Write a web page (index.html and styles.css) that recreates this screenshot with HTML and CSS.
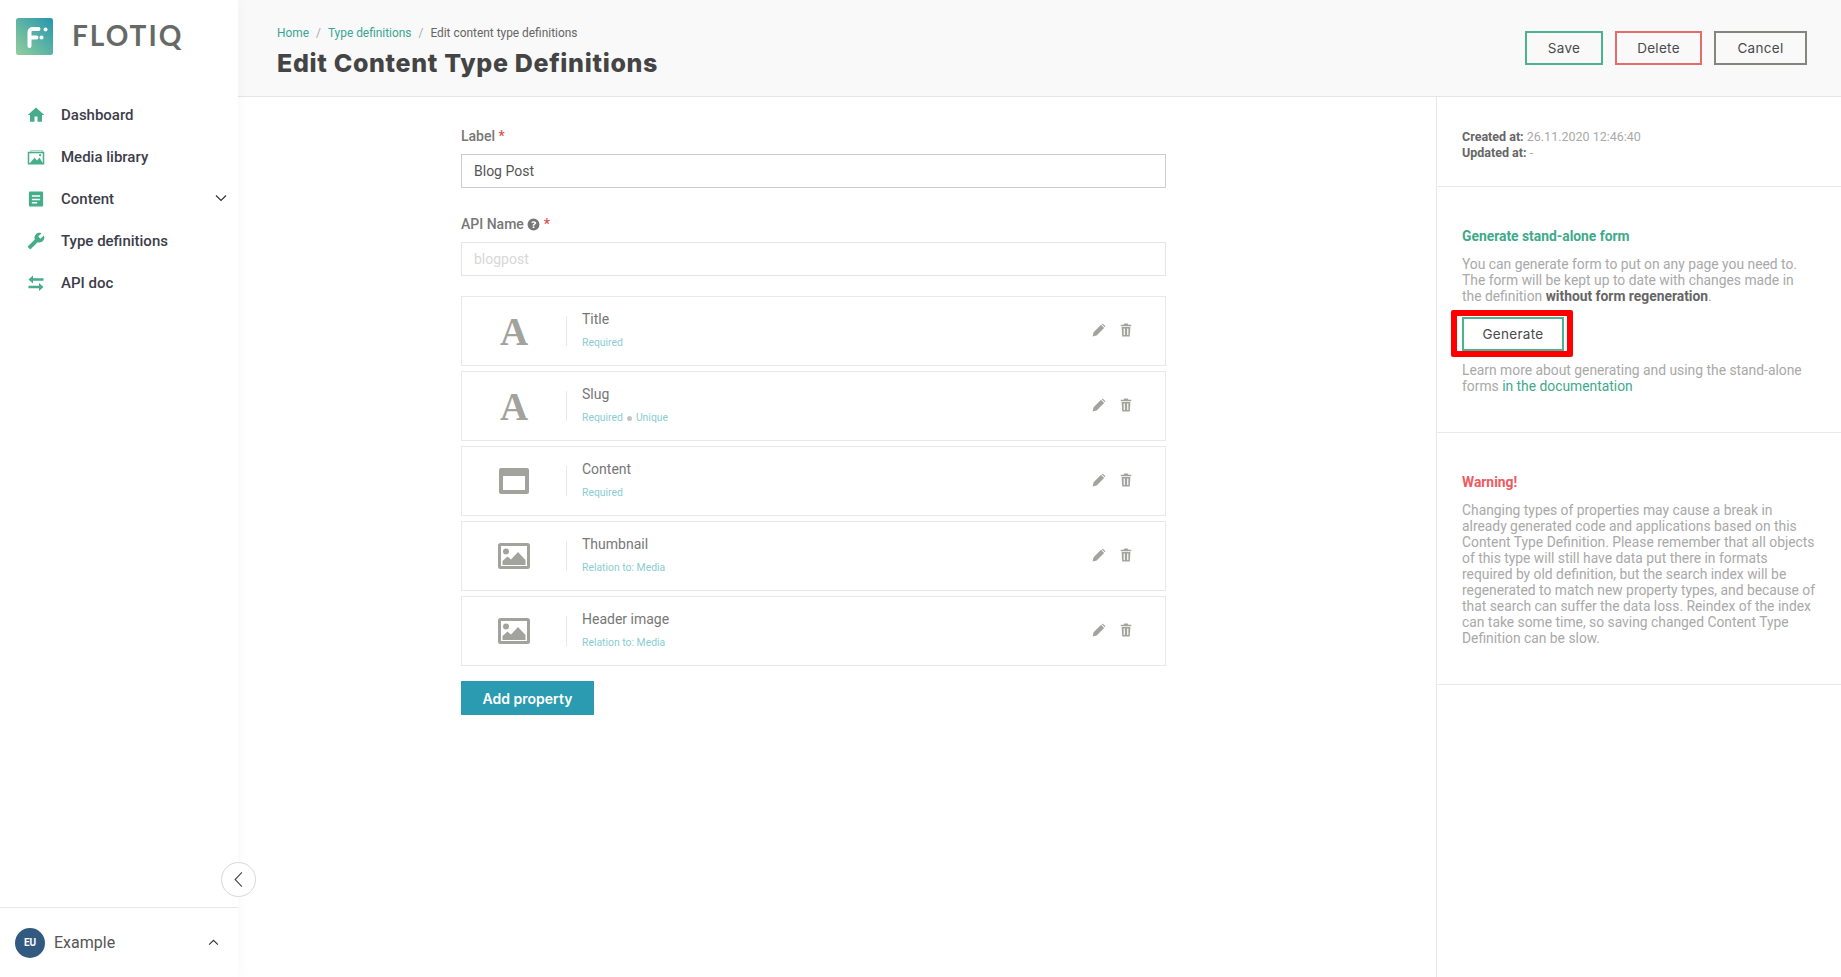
FILE: index.html
```html
<!DOCTYPE html>
<html lang="en">
<head>
  <meta charset="UTF-8">
  <meta name="viewport" content="width=device-width, initial-scale=1.0">
  <title>Flotiq - Edit Content Type Definitions</title>
  <link rel="stylesheet" href="styles.css">
</head>
<body>
  <!-- Sidebar -->
  <aside class="sidebar">
    <div class="brand">
      <svg class="brand-mark" viewBox="0 0 37 37">
        <defs>
          <linearGradient id="brandGrad" x1="1" y1="0" x2="0" y2="1">
            <stop offset="0" stop-color="#2596ad"/>
            <stop offset="1" stop-color="#92cf9d"/>
          </linearGradient>
        </defs>
        <rect width="37" height="37" rx="2.5" fill="url(#brandGrad)"/>
        <path d="M13.5 28V14a3 3 0 0 1 3-3h6M13.5 19.5h7" fill="none" stroke="#fff" stroke-width="4" stroke-linecap="round"/>
        <circle cx="29.5" cy="11.5" r="2" fill="#fff"/>
        <circle cx="25.5" cy="19.5" r="2" fill="#fff"/>
      </svg>
      <span class="brand-name">FLOTIQ</span>
    </div>
    <nav class="nav">
      <a class="nav-item">
        <svg class="nav-icon" viewBox="0 0 24 24"><path d="M10 21v-7h4v7h6v-9h3L12 2 1 12h3v9z"/></svg>
        Dashboard
      </a>
      <a class="nav-item">
        <svg class="nav-icon" viewBox="0 0 24 24">
          <path d="M5 7V3.500h15.500V6" fill="none" stroke="#a9d9c4" stroke-width="1.500"/>
          <path d="M2 6h20v15H2z" fill="none" stroke="#45ad8a" stroke-width="2"/>
          <path d="M4 20l6-7 3.500 3.500 3-4L21 20z"/>
          <circle cx="17.500" cy="9.500" r="1.500"/>
        </svg>
        Media library
      </a>
      <a class="nav-item">
        <svg class="nav-icon" viewBox="0 0 24 24">
          <path d="M4 2h16a1.500 1.500 0 0 1 1.500 1.500v17A1.500 1.500 0 0 1 20 22H4a1.500 1.500 0 0 1-1.500-1.500v-17A1.500 1.500 0 0 1 4 2zm2.500 5v2h11V7zm0 4.500v2h11v-2zm0 4.500v2h7v-2z" fill-rule="evenodd"/>
        </svg>
        Content
        <svg class="nav-caret" viewBox="0 0 12 8"><path d="M1 1.500l5 5 5-5" fill="none" stroke="#333" stroke-width="1.200"/></svg>
      </a>
      <a class="nav-item">
        <svg class="nav-icon flip" viewBox="0 0 24 24"><path d="M22.700 19l-9.100-9.100c.9-2.300.4-5-1.500-6.900-2-2-5-2.400-7.400-1.300L9 6 6 9 1.600 4.700C.4 7.100.9 10.100 2.900 12.100c1.900 1.900 4.600 2.400 6.900 1.500l9.100 9.100c.4.4 1 .4 1.400 0l2.300-2.300c.5-.4.5-1.100.1-1.400z"/></svg>
        Type definitions
      </a>
      <a class="nav-item">
        <svg class="nav-icon" viewBox="0 0 24 24">
          <path d="M8 3v3.500h14v3.500H8v3.500L2 8.200z" transform="translate(0 -1)"/>
          <path d="M16 11v3.500H2V18h14v3.500l6-5.300z" transform="translate(0 1)"/>
        </svg>
        API doc
      </a>
    </nav>
    <button class="collapse-btn">
      <svg viewBox="0 0 12 20"><path d="M10 1.500L2 10l8 8.500" fill="none" stroke="#444" stroke-width="1.300"/></svg>
    </button>
    <div class="account">
      <span class="avatar">EU</span>
      <span class="account-name">Example</span>
      <svg class="account-caret" viewBox="0 0 12 8"><path d="M1 6.500l5-5 5 5" fill="none" stroke="#333" stroke-width="1.300"/></svg>
    </div>
  </aside>

  <div class="page">
    <!-- Header -->
    <header class="page-header">
      <div class="heading">
        <div class="breadcrumbs">
          <a>Home</a><span class="sep">/</span><a>Type definitions</a><span class="sep">/</span><span>Edit content type definitions</span>
        </div>
        <h1>Edit Content Type Definitions</h1>
      </div>
      <div class="header-actions">
        <button class="btn btn-save">Save</button>
        <button class="btn btn-delete">Delete</button>
        <button class="btn btn-cancel">Cancel</button>
      </div>
    </header>

    <div class="page-body">
      <!-- Form -->
      <main class="form">
        <div class="field-label">Label <span class="req">*</span></div>
        <div class="field">Blog Post</div>

        <div class="field-label second">
          API Name
          <svg class="help" viewBox="0 0 24 24"><path d="M12 1a11 11 0 1 0 0 22 11 11 0 0 0 0-22zm1.700 17.500h-3.400v-3h3.400zm2.700-7.700c-.6.900-1.300 1.300-1.900 1.700-.8.500-1 .8-1 1.500v.3h-3v-.6c0-1.500.8-2.200 1.700-2.800.7-.4 1.200-.8 1.200-1.400 0-.7-.6-1.100-1.400-1.100-.9 0-1.600.4-2.200 1.100L7.900 7.900C9 6.600 10.400 5.800 12.500 5.800c2.500 0 4.600 1.400 4.600 3.500 0 .6-.3 1-.7 1.500z" fill-rule="evenodd"/></svg>
          <span class="req">*</span>
        </div>
        <div class="field disabled">blogpost</div>

        <div class="props">
          <div class="prop">
            <div class="prop-icon"><span class="glyph-a">A</span></div>
            <div class="prop-info">
              <div class="prop-name">Title</div>
              <div class="prop-meta">Required</div>
            </div>
            <div class="prop-actions">
              <svg viewBox="0 0 24 24"><path d="M1 23l1.700-7L15.500 3.200l5.300 5.300L8 21.300zM17 1.700a1.500 1.500 0 0 1 2.100 0l3.200 3.200a1.500 1.500 0 0 1 0 2.100L22 7.300 16.700 2z"/></svg>
              <svg viewBox="0 0 24 24"><path d="M9 1h6l1 2h5v2.500H3V3h5zM4.500 7h15l-1 16h-13zM8 9.500v11h2v-11zm6 0v11h2v-11z" fill-rule="evenodd"/></svg>
            </div>
          </div>
          <div class="prop">
            <div class="prop-icon"><span class="glyph-a">A</span></div>
            <div class="prop-info">
              <div class="prop-name">Slug</div>
              <div class="prop-meta">Required<span class="dot"></span>Unique</div>
            </div>
            <div class="prop-actions">
              <svg viewBox="0 0 24 24"><path d="M1 23l1.700-7L15.500 3.200l5.300 5.300L8 21.300zM17 1.700a1.500 1.500 0 0 1 2.100 0l3.200 3.200a1.500 1.500 0 0 1 0 2.100L22 7.300 16.700 2z"/></svg>
              <svg viewBox="0 0 24 24"><path d="M9 1h6l1 2h5v2.500H3V3h5zM4.500 7h15l-1 16h-13zM8 9.500v11h2v-11zm6 0v11h2v-11z" fill-rule="evenodd"/></svg>
            </div>
          </div>
          <div class="prop">
            <div class="prop-icon">
              <svg class="type-icon" viewBox="0 0 32 26"><path d="M3 0h26a2 2 0 0 1 2 2v22a2 2 0 0 1-2 2H3a2 2 0 0 1-2-2V2a2 2 0 0 1 2-2zm2 8v14h22V8z" fill-rule="evenodd"/></svg>
            </div>
            <div class="prop-info">
              <div class="prop-name">Content</div>
              <div class="prop-meta">Required</div>
            </div>
            <div class="prop-actions">
              <svg viewBox="0 0 24 24"><path d="M1 23l1.700-7L15.500 3.200l5.300 5.300L8 21.300zM17 1.700a1.500 1.500 0 0 1 2.100 0l3.200 3.200a1.500 1.500 0 0 1 0 2.100L22 7.300 16.700 2z"/></svg>
              <svg viewBox="0 0 24 24"><path d="M9 1h6l1 2h5v2.500H3V3h5zM4.500 7h15l-1 16h-13zM8 9.500v11h2v-11zm6 0v11h2v-11z" fill-rule="evenodd"/></svg>
            </div>
          </div>
          <div class="prop">
            <div class="prop-icon">
              <svg class="type-icon" viewBox="0 0 32 26">
                <path d="M2.500 0h27A2.500 2.500 0 0 1 32 2.500v21a2.500 2.500 0 0 1-2.500 2.500h-27A2.500 2.500 0 0 1 0 23.500v-21A2.500 2.500 0 0 1 2.500 0zm.5 3v20h26V3z" fill-rule="evenodd"/>
                <circle cx="8" cy="8.500" r="3"/>
                <path d="M4.500 22v-4l5-4.500 3.500 3 7-7.500 7.500 8v5z"/>
              </svg>
            </div>
            <div class="prop-info">
              <div class="prop-name">Thumbnail</div>
              <div class="prop-meta">Relation to: Media</div>
            </div>
            <div class="prop-actions">
              <svg viewBox="0 0 24 24"><path d="M1 23l1.700-7L15.500 3.200l5.300 5.300L8 21.300zM17 1.700a1.500 1.500 0 0 1 2.100 0l3.200 3.200a1.500 1.500 0 0 1 0 2.100L22 7.300 16.700 2z"/></svg>
              <svg viewBox="0 0 24 24"><path d="M9 1h6l1 2h5v2.500H3V3h5zM4.500 7h15l-1 16h-13zM8 9.500v11h2v-11zm6 0v11h2v-11z" fill-rule="evenodd"/></svg>
            </div>
          </div>
          <div class="prop">
            <div class="prop-icon">
              <svg class="type-icon" viewBox="0 0 32 26">
                <path d="M2.500 0h27A2.500 2.500 0 0 1 32 2.500v21a2.500 2.500 0 0 1-2.500 2.500h-27A2.500 2.500 0 0 1 0 23.500v-21A2.500 2.500 0 0 1 2.500 0zm.5 3v20h26V3z" fill-rule="evenodd"/>
                <circle cx="8" cy="8.500" r="3"/>
                <path d="M4.500 22v-4l5-4.500 3.500 3 7-7.500 7.500 8v5z"/>
              </svg>
            </div>
            <div class="prop-info">
              <div class="prop-name">Header image</div>
              <div class="prop-meta">Relation to: Media</div>
            </div>
            <div class="prop-actions">
              <svg viewBox="0 0 24 24"><path d="M1 23l1.700-7L15.500 3.200l5.300 5.300L8 21.300zM17 1.700a1.500 1.500 0 0 1 2.100 0l3.200 3.200a1.500 1.500 0 0 1 0 2.100L22 7.300 16.700 2z"/></svg>
              <svg viewBox="0 0 24 24"><path d="M9 1h6l1 2h5v2.500H3V3h5zM4.500 7h15l-1 16h-13zM8 9.500v11h2v-11zm6 0v11h2v-11z" fill-rule="evenodd"/></svg>
            </div>
          </div>
        </div>

        <button class="btn-add">Add property</button>
      </main>

      <!-- Right panel -->
      <aside class="panel">
        <section class="panel-section meta">
          <div><strong>Created at:</strong> 26.11.2020 12:46:40</div>
          <div><strong>Updated at:</strong> -</div>
        </section>
        <section class="panel-section">
          <h3 class="panel-title">Generate stand-alone form</h3>
          <p>You can generate form to put on any page you need to. The form will be kept up to date with changes made in the definition <strong>without form regeneration</strong>.</p>
          <div class="generate-wrap">
            <button class="btn btn-generate">Generate</button>
            <span class="highlight"></span>
          </div>
          <p>Learn more about generating and using the stand-alone forms <a>in the documentation</a></p>
        </section>
        <section class="panel-section">
          <h3 class="panel-title warning">Warning!</h3>
          <p>Changing types of properties may cause a break in already generated code and applications based on this Content Type Definition. Please remember that all objects of this type will still have data put there in formats required by old definition, but the search index will be regenerated to match new property types, and because of that search can suffer the data loss. Reindex of the index can take some time, so saving changed Content Type Definition can be slow.</p>
        </section>
      </aside>
    </div>
  </div>
</body>
</html>
```

FILE: styles.css
```css
* {
  box-sizing: border-box;
}

body {
  margin: 0;
  height: 100vh;
  display: flex;
  overflow: hidden;
  background: #fff;
  font-family: Roboto, sans-serif;
  font-size: 14px;
}

/* Sidebar */
.sidebar {
  position: relative;
  z-index: 2;
  width: 238px;
  flex-shrink: 0;
  display: flex;
  flex-direction: column;
  background: #fff;
  box-shadow: 0 0 14px rgba(0, 0, 0, 0.04);
}

.brand {
  display: flex;
  align-items: center;
  gap: 19px;
  height: 73px;
  padding: 0 16px;
  margin-bottom: 21px;
}

.brand-mark {
  width: 37px;
  height: 37px;
}

.brand-name {
  margin-top: -3px;
  font-family: Lato, sans-serif;
  font-weight: 700;
  font-size: 28px;
  letter-spacing: 2px;
  color: #666a66;
}

.nav-item {
  display: flex;
  align-items: center;
  gap: 15px;
  height: 42px;
  padding: 0 11px 0 26px;
  font-size: 15px;
  color: #3d3d4a;
  font-weight: 500;
}

.nav-icon {
  width: 20px;
  height: 18px;
  fill: #45ad8a;
}

.nav-icon.flip {
  transform: scaleX(-1);
}

.nav-caret {
  width: 12px;
  height: 8px;
  margin-left: auto;
  margin-top: -3px;
}

.collapse-btn {
  position: absolute;
  right: -18px;
  bottom: 80px;
  width: 35px;
  height: 35px;
  padding: 0;
  display: flex;
  align-items: center;
  justify-content: center;
  background: #fff;
  border: 1px solid #d8d8d8;
  border-radius: 50%;
}

.collapse-btn svg {
  width: 11px;
  height: 17px;
}

.account {
  margin-top: auto;
  display: flex;
  align-items: center;
  height: 70px;
  padding: 0 19px 0 15px;
  border-top: 1px solid #e8e8e8;
}

.avatar {
  width: 30px;
  height: 30px;
  display: flex;
  align-items: center;
  justify-content: center;
  border-radius: 50%;
  background: #325a80;
  color: #fff;
  font-size: 10px;
  font-weight: 700;
}

.account-name {
  margin-left: 9px;
  font-size: 16px;
  color: #555;
}

.account-caret {
  width: 11px;
  height: 7px;
  margin-left: auto;
}

/* Page */
.page {
  flex: 1;
  min-width: 0;
  display: flex;
  flex-direction: column;
}

.page-header {
  height: 97px;
  display: flex;
  align-items: center;
  justify-content: space-between;
  padding: 0 34px 0 39px;
  background: #f9f9f9;
  border-bottom: 1px solid #e6e6e6;
}

.heading {
  padding-top: 8px;
}

.breadcrumbs {
  font-size: 11.900px;
  line-height: 14px;
  color: #666;
}

.breadcrumbs a {
  color: #3aa593;
}

.breadcrumbs .sep {
  margin: 0 7px;
  color: #aaa;
}

h1 {
  margin: 8px 0 0;
  font-family: Inter, sans-serif;
  font-size: 25px;
  font-weight: 800;
  line-height: 30px;
  letter-spacing: 0.670px;
  color: #444;
}

.header-actions {
  display: flex;
  gap: 12px;
  margin-top: -1px;
}

.btn {
  height: 34px;
  padding: 0;
  background: none;
  border: 2px solid;
  font-family: Inter, sans-serif;
  font-size: 13.500px;
  letter-spacing: 0.300px;
  color: #4a4a4a;
}

.btn-save {
  width: 78px;
  border-color: #4bb38f;
}

.btn-delete {
  width: 87px;
  border-color: #e56b6f;
}

.btn-cancel {
  width: 93px;
  border-color: #85857f;
}

.btn-generate {
  width: 102px;
  border-color: #4bb38f;
  display: block;
}

.page-body {
  flex: 1;
  display: flex;
  justify-content: space-between;
  min-height: 0;
}

/* Form */
.form {
  width: 705px;
  margin-left: 223px;
  padding-top: 31px;
}

.field-label {
  height: 16px;
  line-height: 16px;
  font-weight: 500;
  color: #777;
  margin-bottom: 10px;
}

.field-label.second {
  margin-top: 28px;
}

.req {
  color: #d9534f;
}

.help {
  width: 13px;
  height: 13px;
  fill: #777;
  vertical-align: -2px;
}

.field {
  height: 34px;
  line-height: 32px;
  padding: 0 12px;
  border: 1px solid #ccc;
  color: #555;
}

.field.disabled {
  border-color: #e6e6e6;
  color: #d8d8d8;
}

.props {
  display: flex;
  flex-direction: column;
  gap: 5px;
  margin-top: 20px;
}

.prop {
  height: 70px;
  display: flex;
  align-items: center;
  border: 1px solid #e8e8e8;
}

.prop-icon {
  width: 105px;
  height: 30px;
  display: flex;
  align-items: center;
  justify-content: center;
  border-right: 1px solid #e8e8e8;
}

.glyph-a {
  font-family: "Liberation Serif", serif;
  font-weight: 700;
  font-size: 39px;
  line-height: 30px;
  color: #a3a39e;
  margin-top: 1px;
}

.type-icon {
  width: 32px;
  height: 26px;
  fill: #a3a39e;
}

.prop-info {
  flex: 1;
  padding-left: 15px;
}

.prop-name {
  line-height: 18px;
  color: #777;
  margin-top: -2px;
}

.prop-meta {
  margin-top: 8px;
  line-height: 14px;
  font-size: 10.400px;
  color: #8accd2;
}

.dot {
  display: inline-block;
  width: 5px;
  height: 5px;
  margin: 0 4px;
  border-radius: 50%;
  background: #c4c4c4;
}

.prop-actions {
  display: flex;
  gap: 13px;
  margin-top: -2px;
  padding-right: 32px;
}

.prop-actions svg {
  width: 14px;
  height: 14px;
  fill: #a3a39e;
}

.btn-add {
  height: 34px;
  width: 133px;
  margin-top: 15px;
  padding: 0;
  border: 0;
  background: #2a9bb0;
  color: #fff;
  font-family: Inter, sans-serif;
  font-size: 14px;
  font-weight: 600;
}

/* Right panel */
.panel {
  width: 405px;
  border-left: 1px solid #e8e8e8;
  font-size: 13.850px;
  line-height: 16px;
  color: #a9a9a9;
}

.panel-section {
  padding: 41px 25px 38px 25px;
  border-bottom: 1px solid #e8e8e8;
}

.panel-section.meta {
  padding-top: 32px;
  padding-bottom: 25px;
  font-size: 12.500px;
}

.panel strong {
  color: #666;
  font-weight: 700;
}

.panel-title {
  margin: 0 0 12px;
  font-size: 13.850px;
  line-height: 16px;
  font-weight: 700;
  color: #3fa98a;
}

.panel-title.warning {
  color: #ef5a5f;
}

.panel p {
  margin: 0;
}

.panel a {
  color: #3fa98a;
}

.generate-wrap {
  position: relative;
  width: 102px;
  margin: 13px 0 11px;
}

.highlight {
  position: absolute;
  top: -7px;
  left: -11px;
  right: -9px;
  bottom: -6px;
  border: 6px solid #f00;
  border-radius: 2px;
}
```
